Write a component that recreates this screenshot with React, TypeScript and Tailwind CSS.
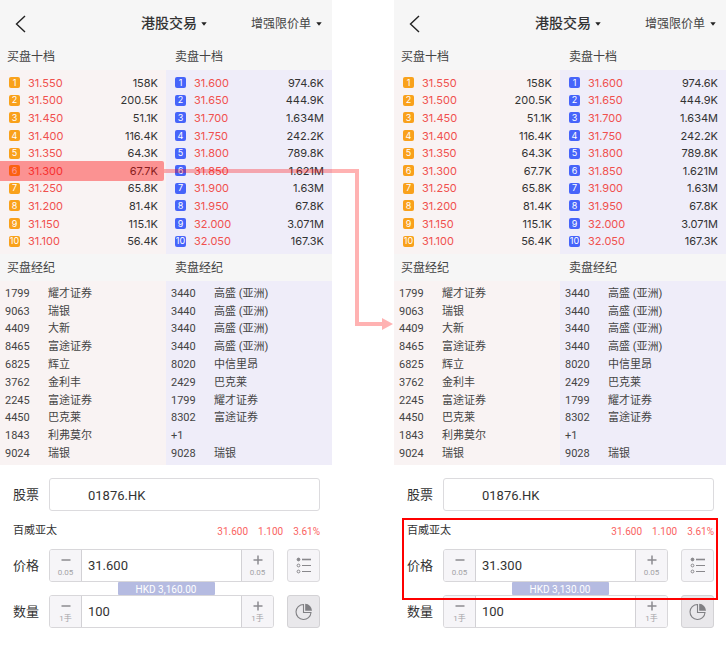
import { cva } from "class-variance-authority";
import clsx from "clsx";

type Side = "bid" | "ask";
type Level = [price: string, volume: string];
type Broker = [code: string, name: string];

const BIDS: Level[] = [
  ["31.550", "158K"],
  ["31.500", "200.5K"],
  ["31.450", "51.1K"],
  ["31.400", "116.4K"],
  ["31.350", "64.3K"],
  ["31.300", "67.7K"],
  ["31.250", "65.8K"],
  ["31.200", "81.4K"],
  ["31.150", "115.1K"],
  ["31.100", "56.4K"],
];

const ASKS: Level[] = [
  ["31.600", "974.6K"],
  ["31.650", "444.9K"],
  ["31.700", "1.634M"],
  ["31.750", "242.2K"],
  ["31.800", "789.8K"],
  ["31.850", "1.621M"],
  ["31.900", "1.63M"],
  ["31.950", "67.8K"],
  ["32.000", "3.071M"],
  ["32.050", "167.3K"],
];

const BID_BROKERS: Broker[] = [
  ["1799", "耀才证券"],
  ["9063", "瑞银"],
  ["4409", "大新"],
  ["8465", "富途证券"],
  ["6825", "辉立"],
  ["3762", "金利丰"],
  ["2245", "富途证券"],
  ["4450", "巴克莱"],
  ["1843", "利弗莫尔"],
  ["9024", "瑞银"],
];

const ASK_BROKERS: Broker[] = [
  ["3440", "高盛 (亚洲)"],
  ["3440", "高盛 (亚洲)"],
  ["3440", "高盛 (亚洲)"],
  ["3440", "高盛 (亚洲)"],
  ["8020", "中信里昂"],
  ["2429", "巴克莱"],
  ["1799", "耀才证券"],
  ["8302", "富途证券"],
  ["+1", ""],
  ["9028", "瑞银"],
];

const column = cva("min-w-0 pt-1", {
  variants: {
    side: { bid: "bg-[#f9f3f3]", ask: "bg-[#efedf9]" },
  },
});

function Caret() {
  return (
    <svg viewBox="0 0 6 4" className="pointer-events-none h-1 w-1.5" aria-hidden="true">
      <path d="M0.3 0.3h5.4L3 3.7z" fill="#222" />
    </svg>
  );
}

function SectionTitles({ bid, ask }: { bid: string; ask: string }) {
  return (
    <div className="grid h-[27px] grid-cols-2 items-center text-[12px] text-[#444]">
      <h2 className="pl-[7px]">{bid}</h2>
      <h2 className="pl-[9px]">{ask}</h2>
    </div>
  );
}

/* Runs from the picked bid over to the second screen */
function LinkArrow() {
  return (
    <svg
      width="230"
      height="162"
      viewBox="0 0 230 162"
      className="absolute top-1/2 left-full z-10 -mt-[2px] max-w-none"
      aria-hidden="true"
    >
      <path
        d="M0 0H195V153H218V149L229 155L218 161V157H191V4H0z"
        fill="#ff0000"
        fillOpacity="0.3"
      />
    </svg>
  );
}

function DepthTable({
  side,
  label,
  levels,
  picked,
}: {
  side: Side;
  label: string;
  levels: Level[];
  picked?: string;
}) {
  return (
    <div className={clsx(column({ side }), "pb-1")}>
      <table className="h-44 w-full font-[Inter,sans-serif] text-[11px] leading-4" aria-label={label}>
        <tbody>
          {levels.map(([price, volume], i) => (
            <tr key={price} className="relative">
              <td className="w-7 pl-[9px]">
                <span
                  className={clsx(
                    "flex size-[11px] items-center justify-center rounded-[2px] text-[9px] text-white",
                    side === "bid" ? "bg-[#f9a11b]" : "bg-[#4664fa]"
                  )}
                >
                  {i + 1}
                </span>
                {picked === price && (
                  <span className="absolute -inset-y-px right-0.5 left-0 rounded-r-[2px] bg-[#ff0000]/40">
                    <LinkArrow />
                  </span>
                )}
              </td>
              <td className="text-[#f0504e]">{price}</td>
              <td className="pr-2 text-right text-[#333]">{volume}</td>
            </tr>
          ))}
        </tbody>
      </table>
    </div>
  );
}

function BrokerTable({ side, label, brokers }: { side: Side; label: string; brokers: Broker[] }) {
  return (
    <div className={clsx(column({ side }), "pb-0.5")}>
      <table className="h-[178px] w-full text-[11px] leading-4 text-[#444]" aria-label={label}>
        <tbody>
          {brokers.map(([code, name], i) => (
            <tr key={i}>
              <td className="w-12 pl-[5px]">{code}</td>
              <td>{name}</td>
            </tr>
          ))}
        </tbody>
      </table>
    </div>
  );
}

function StepButton({ sign, step, label }: { sign: "minus" | "plus"; step: string; label: string }) {
  return (
    <button
      type="button"
      aria-label={label}
      className={clsx(
        "flex w-8 shrink-0 flex-col items-center justify-center gap-0.5 border-[#d2d1d5] bg-[#f6f5f8] pt-0.5",
        sign === "minus" ? "rounded-l-[2px] border-r" : "rounded-r-[2px] border-l"
      )}
    >
      <svg viewBox="0 0 10 10" className="size-2.5" aria-hidden="true">
        <path
          d={sign === "minus" ? "M0.5 5h9" : "M0.5 5h9M5 0.5v9"}
          stroke="#8c8b90"
          strokeWidth="1.5"
        />
      </svg>
      <span className="text-[8px] leading-[11px] text-[#a3a2a6]">{step}</span>
    </button>
  );
}

function Stepper({ id, value, step }: { id: string; value: string; step: string }) {
  return (
    <div className="flex h-[33px] min-w-0 flex-1 rounded-[3px] border border-[#d8d7da] bg-white">
      <StepButton sign="minus" step={step} label={`减 ${step}`} />
      <input id={id} defaultValue={value} className="w-0 min-w-0 flex-1 pl-1.5 text-[13px] text-[#333] outline-none" />
      <StepButton sign="plus" step={step} label={`加 ${step}`} />
    </div>
  );
}

function ListIcon() {
  return (
    <svg viewBox="0 0 16 18" className="h-[18px] w-4" fill="none" stroke="#89888c" aria-hidden="true">
      <path d="M6 2.500h9" strokeWidth="1.6" />
      <path d="M6 8.500h9M6 14.500h9" />
      <circle cx="2.5" cy="2.5" r="1.4" fill="#89888c" />
      <circle cx="2.5" cy="8.5" r="1.4" />
      <circle cx="2.5" cy="14.5" r="1.4" />
    </svg>
  );
}

function PieIcon() {
  return (
    <svg viewBox="0 0 18 18" className="size-[18px]" aria-hidden="true">
      <path d="M8.500 1.500A7.500 7.500 0 1 0 16 9.500H8.500z" fill="none" stroke="#808084" strokeWidth="1.1" />
      <path d="M10.200 0.800A7 7 0 0 1 17 7.700H10.200z" fill="#808084" />
    </svg>
  );
}

interface TradeScreenProps {
  id: string;
  price: string;
  amount: string;
  picked?: string;
  framed?: boolean;
}

function TradeScreen({ id, price, amount, picked, framed }: TradeScreenProps) {
  return (
    <section className="min-w-0 bg-white">
      <div className="bg-[#f6f6f6]">
        <header className="flex h-[43px] items-center gap-11 pt-1 pr-[10px] pl-[15px]">
          <button type="button" aria-label="返回" className="mr-auto">
            <svg viewBox="0 0 11 18" className="h-[18px] w-[11px]" fill="none" stroke="#222" strokeWidth="1.4" aria-hidden="true">
              <path d="M10 1L1.500 9L10 17" />
            </svg>
          </button>
          <div className="flex items-center gap-1">
            <select aria-label="市场" className="appearance-none text-[14px] font-medium text-[#333]">
              <option>港股交易</option>
            </select>
            <Caret />
          </div>
          <div className="flex items-center gap-1">
            <select aria-label="订单类型" className="appearance-none text-[12px] text-[#444]">
              <option>增强限价单</option>
            </select>
            <Caret />
          </div>
        </header>

        <SectionTitles bid="买盘十档" ask="卖盘十档" />
        <div className="grid grid-cols-2">
          <DepthTable side="bid" label="买盘十档" levels={BIDS} picked={picked} />
          <DepthTable side="ask" label="卖盘十档" levels={ASKS} />
        </div>

        <SectionTitles bid="买盘经纪" ask="卖盘经纪" />
        <div className="grid grid-cols-2">
          <BrokerTable side="bid" label="买盘经纪" brokers={BID_BROKERS} />
          <BrokerTable side="ask" label="卖盘经纪" brokers={ASK_BROKERS} />
        </div>
      </div>

      {/* Order form */}
      <form className="pt-[13px] text-[13px] text-[#333]">
        <div className="flex items-center pr-3 pl-[13px]">
          <label htmlFor={`${id}-stock`} className="w-9 shrink-0">
            股票
          </label>
          <input
            id={`${id}-stock`}
            defaultValue="01876.HK"
            className="h-[33px] min-w-0 flex-1 rounded-[3px] border border-[#dcdbde] pt-0.5 pl-[38px] outline-none"
          />
        </div>

        <div className="relative mt-[7px]">
          <div className="flex h-[31px] items-center justify-between pr-3 pb-1 pl-[13px]">
            <span className="text-[11px]">百威亚太</span>
            <p className="flex gap-[10px] text-[10px] text-[#fa6462]">
              <span>31.600</span>
              <span>1.100</span>
              <span>3.61%</span>
            </p>
          </div>
          <div className="flex items-center pr-3 pl-[13px]">
            <label htmlFor={`${id}-price`} className="w-9 shrink-0">
              价格
            </label>
            <Stepper id={`${id}-price`} value={price} step="0.05" />
            <button
              type="button"
              aria-label="价格选项"
              className="ml-[13px] flex size-[33px] items-center justify-center rounded-[3px] border border-[#dcdbde] bg-[#f6f5f8]"
            >
              <ListIcon />
            </button>
          </div>
          <p className="mx-auto h-[13px] w-[97px] rounded-[1px] bg-[#b5bbe1] text-center text-[10px] leading-[15px] text-white">
            {amount}
          </p>
          {framed && <div className="pointer-events-none absolute inset-x-2 top-0 -bottom-[5px] z-10 border-2 border-[#fe0000]" />}
        </div>

        <div className="flex items-center pr-3 pl-[13px]">
          <label htmlFor={`${id}-qty`} className="w-9 shrink-0">
            数量
          </label>
          <Stepper id={`${id}-qty`} value="100" step="1手" />
          <button
            type="button"
            aria-label="仓位比例"
            className="ml-[13px] flex size-[33px] items-center justify-center rounded-[3px] border border-[#d3d2d5] bg-[#e9e8eb]"
          >
            <PieIcon />
          </button>
        </div>
      </form>
    </section>
  );
}

export default function App() {
  return (
    <main className="grid min-h-screen grid-cols-2 gap-[62px] bg-white font-[Roboto,'Noto_Sans_CJK_SC',sans-serif]">
      <TradeScreen id="before" price="31.600" amount="HKD 3,160.00" picked="31.300" />
      <TradeScreen id="after" price="31.300" amount="HKD 3,130.00" framed />
    </main>
  );
}
